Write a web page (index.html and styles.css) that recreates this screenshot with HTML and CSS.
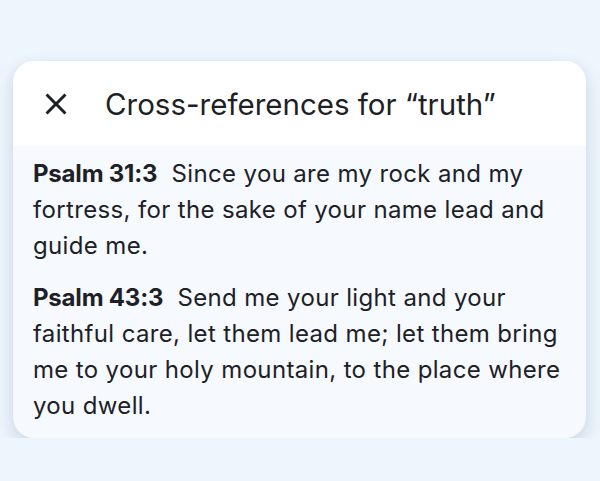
FILE: index.html
```html
<!DOCTYPE html>
<html lang="en">
<head>
  <meta charset="UTF-8">
  <title>Cross-references</title>
  <meta name="viewport" content="width=device-width, initial-scale=1.0">
  <link rel="stylesheet" href="styles.css">
</head>
<body>

  <!-- Cross-reference sheet -->
  <div class="sheet">
    <div class="sheet-header">
      <button class="close-btn" aria-label="Close">
        <svg viewBox="0 0 24 24" width="36" height="36"><path d="M19 6.41 17.59 5 12 10.59 6.41 5 5 6.41 10.59 12 5 17.59 6.41 19 12 13.41 17.59 19 19 17.59 13.41 12z" fill="currentColor"/></svg>
      </button>
      <h2>Cross-references for “truth”</h2>
    </div>

    <div class="sheet-body">
      <p class="verse"><b class="ref">Psalm 31:3</b>&nbsp; Since you are my rock and my fortress, for the sake of your name lead and guide me.</p>
      <p class="verse"><b class="ref">Psalm 43:3</b>&nbsp; Send me your light and your faithful care, let them lead me; let them bring me to your holy mountain, to the place where you dwell.</p>
    </div>
  </div>

</body>
</html>
```

FILE: styles.css
```css
body {
  font-family: Inter, "Noto Sans", sans-serif;
  background-color: #edf5fd;
  color: #1d2126;
  margin: 0;
  padding: 61px 14px 0 13px;
}

.sheet {
  background: #f6f9fe;
  border-radius: 21px;
  overflow: hidden;
  box-shadow: 0 5px 14px rgba(30, 60, 100, 0.13), 0 10px 30px rgba(30, 60, 100, 0.05);
}

.sheet-header {
  display: flex;
  align-items: center;
  height: 85px;
  background: white;
  padding: 0 0 0 25px;
}

.close-btn {
  display: flex;
  background: none;
  border: none;
  padding: 0;
  color: #1d2126;
  cursor: pointer;
}

.sheet-header h2 {
  margin: 0 0 0 31px;
  font-size: 29.5px;
  font-weight: 400;
}

.sheet-body {
  padding: 10px 20px 14px 20px;
}

.verse {
  margin: 0 0 16px;
  font-size: 24px;
  line-height: 36px;
  letter-spacing: 0.35px;
}

.verse:last-child { margin-bottom: 0; }

.ref {
  font-weight: 700;
  letter-spacing: -0.2px;
}
```
